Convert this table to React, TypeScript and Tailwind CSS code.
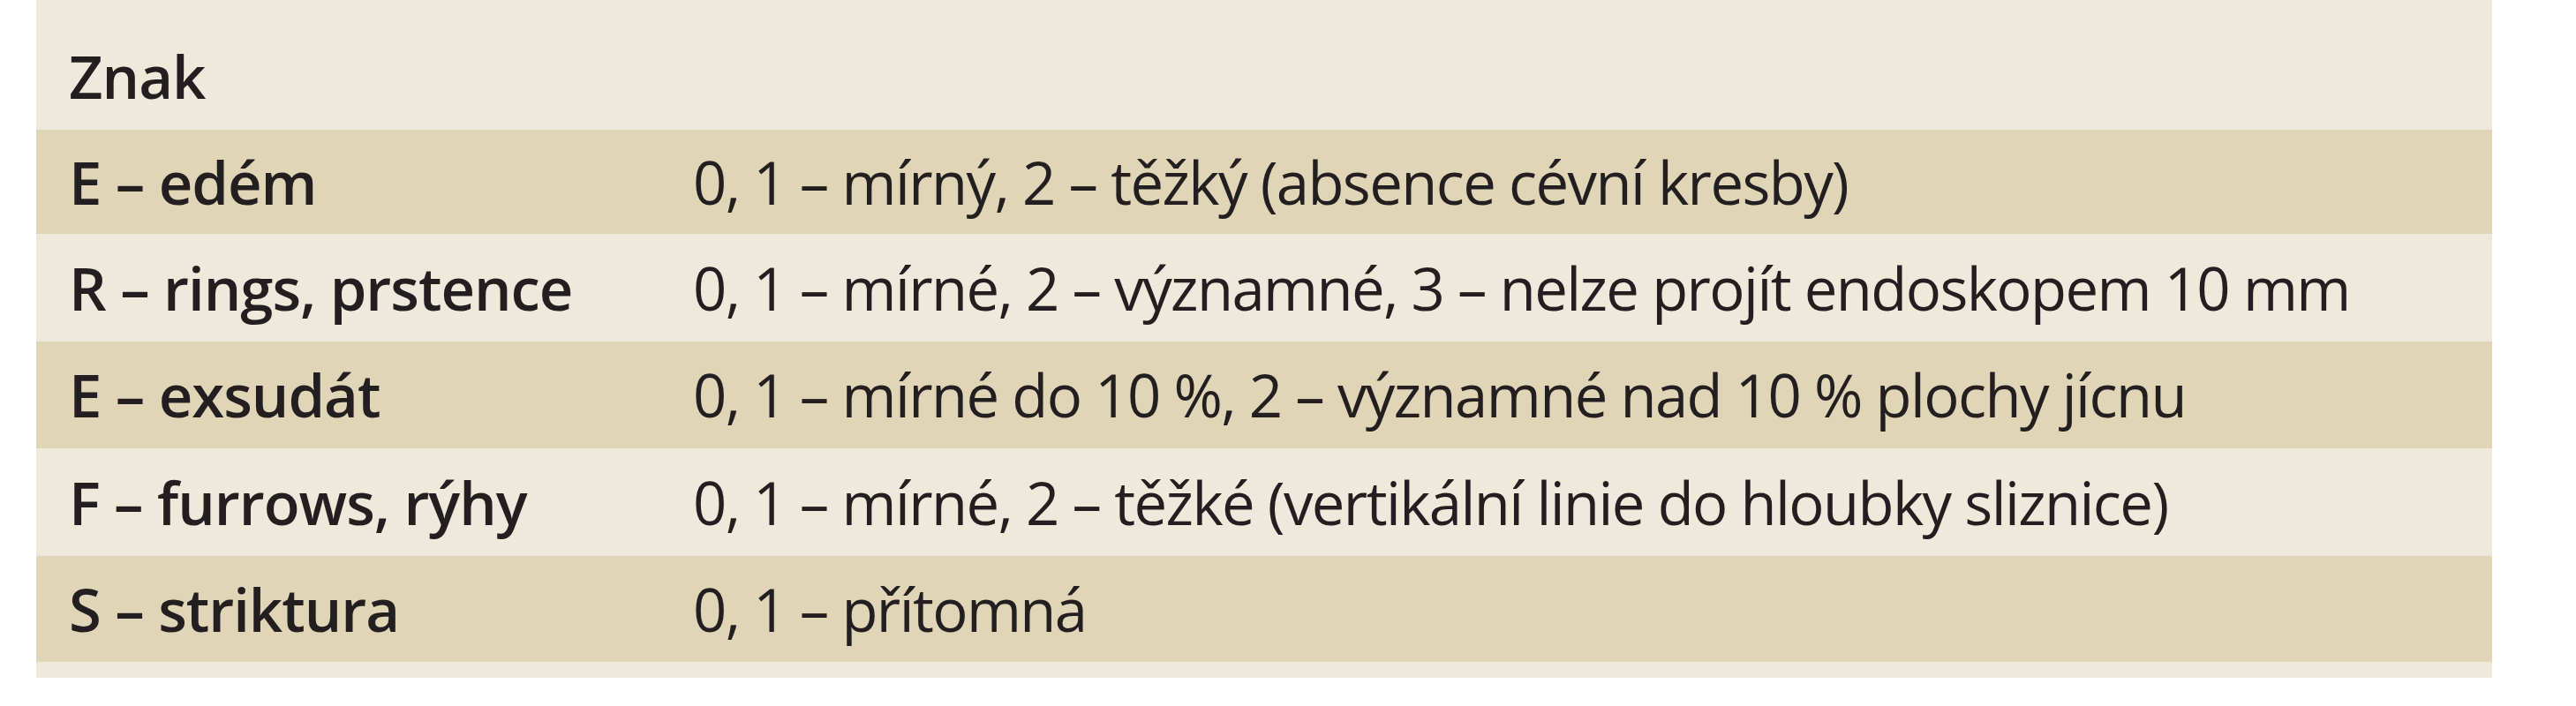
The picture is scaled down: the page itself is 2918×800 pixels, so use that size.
import React from "react";

const rows: { k: string; v: string; h: string }[] = [
  { k: "E – edém", v: "0, 1 – mírný, 2 – těžký (absence cévní kresby)", h: "h-[118px]" },
  { k: "R – rings, prstence", v: "0, 1 – mírné, 2 – významné, 3 – nelze projít endoskopem 10 mm", h: "h-[122px]" },
  { k: "E – exsudát", v: "0, 1 – mírné do 10 %, 2 – významné nad 10 % plochy jícnu", h: "h-[121px]" },
  { k: "F – furrows, rýhy", v: "0, 1 – mírné, 2 – těžké (vertikální linie do hloubky sliznice)", h: "h-[122px]" },
  { k: "S – striktura", v: "0, 1 – přítomná", h: "h-[120px]" },
];

export default function App() {
  return (
    <div className="w-full h-[800px] bg-white font-['Open_Sans',sans-serif] text-[#231f20]">
      <div className="ml-[41px] w-[2782px] flex flex-col">
        <div className="h-[147px] bg-[#efe9dc] flex items-center pt-[26px] pl-[37px] text-[67px] font-semibold tracking-[-1px]">
          Znak
        </div>
        {rows.map((r, i) => (
          <div
            key={i}
            className={`${r.h} grid grid-cols-[744px_1fr] items-center ${i % 2 === 0 ? "bg-[#e0d6b7]" : "bg-[#efe9dc]"}`}
          >
            <div className="pl-[37px] text-[67px] font-semibold tracking-[-1px] whitespace-nowrap">{r.k}</div>
            <div className="text-[67px] tracking-[-1.6px] whitespace-nowrap">{r.v}</div>
          </div>
        ))}
        <div className="h-[18px] bg-[#efe9dc]" />
      </div>
    </div>
  );
}
